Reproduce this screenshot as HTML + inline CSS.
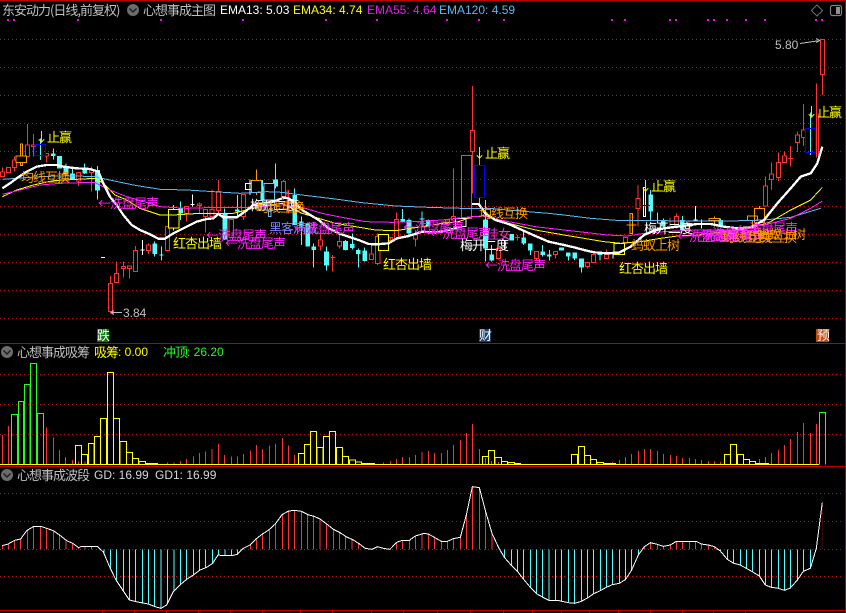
<!DOCTYPE html>
<html><head><meta charset="utf-8"><title>心想事成</title>
<style>
html,body{margin:0;padding:0;background:#000;width:846px;height:613px;overflow:hidden}
svg{display:block;position:absolute;left:0;top:0}
text{font-family:"Liberation Sans","WenQuanYi Zen Hei","Noto Sans CJK SC",sans-serif;font-size:12px}
.c text,text.c{font-family:"WenQuanYi Zen Hei","Noto Sans CJK SC",sans-serif;font-size:13px;letter-spacing:-1px}
.n{fill:none}
</style></head><body>
<svg width="846" height="613" viewBox="0 0 846 613" xmlns="http://www.w3.org/2000/svg" shape-rendering="crispEdges">
<defs>
<clipPath id="l2"><polygon points="6,628 6,617 22,613 44,601 62,597 80,572 100,560 122,559 140,565 160,572 180,586 200,602 218,610 236,623 244,619 292,619 310,636 330,683 348,720 368,750 388,780 408,785 445,792 465,800 483,805 500,795 520,755 540,735 560,718 580,705 600,690 620,682 638,670 654,645 670,647 696,647 712,643 730,625 750,615 768,597 786,583 806,570 826,552 846,524 866,513 884,511 904,514 924,524 942,529 960,537 980,552 1000,568 1020,578 1040,591 1060,600 1080,613 1096,625 1116,628 1132,620 1150,625 1170,628 1190,607 1206,601 1228,601 1246,588 1269,581 1269,628"/></clipPath>
<clipPath id="r2"><polygon points="0,628 0,580 16,582 34,592 55,604 73,604 91,596 112,592 130,525 148,440 169,443 188,515 207,580 228,625 244,652 264,675 284,695 302,718 322,742 342,762 360,772 378,781 408,782 436,788 455,790 475,784 495,773 512,761 532,752 550,742 568,734 589,730 607,719 625,692 646,645 664,620 682,608 703,613 721,619 742,615 760,604 820,604 835,612 856,615 874,620 892,633 913,658 932,670 952,675 970,685 988,695 1009,708 1027,735 1045,742 1066,745 1084,751 1102,744 1123,720 1141,694 1162,685 1180,625 1198,487 1198,628"/></clipPath>
</defs>

<!-- frame -->
<rect x="0" y="0" width="846" height="1" fill="#c00000"/>
<rect x="845" y="0" width="1" height="613" fill="#c00000"/>
<rect x="0" y="343" width="846" height="1" fill="#c00000"/>
<rect x="0" y="466" width="846" height="1" fill="#c00000"/>
<rect x="0" y="610" width="846" height="1" fill="#c00000"/>
<path stroke="#c00000" d="M102.500 611V613M134.500 611V613M166.500 611V613M198.500 611V613M230.500 611V613M262.500 611V613M300.500 611V613M332.500 611V613M371.500 611V613M403.500 611V613M437.500 611V613M470.500 611V613M503.500 611V613M532.500 611V613M561.500 611V613M589.500 611V613M618.500 611V613M650.500 611V613M682.500 611V613M713.500 611V613M745.500 611V613"/>

<!-- dotted grid -->
<path stroke="#c01010" stroke-dasharray="1 3" class="n" d="M0 39.500H844M0 67.500H844M0 95.500H844M0 123.500H844M0 151.500H844M0 179.500H844M0 206.500H844M0 234.500H844M0 262.500H844M0 290.500H844M0 318.500H844M0 374.500H844M0 404.500H844M0 434.500H844M0 493.500H844M0 521.500H844M0 549.500H844M0 576.500H844"/>

<!-- magenta dots -->
<path stroke="#ff00ff" stroke-width="2" d="M7 20h2M13 20h2M77 20h2M160 20h2M242 20h2M325 20h2M376 20h2M446 20h2M478 20h2M503 20h2M611 20h2M624 20h2M669 20h2M675 20h2M707 20h2M713 20h2M726 20h2M745 20h2M764 20h2M815 20h2M821 20h2"/>

<!-- main: left third, zoom coordinates -->
<g transform="scale(.33333)" stroke-width="3">
<path stroke="#ff3232" class="n" d="M7 502V516M44 470V480M44 503V515M82 372V435M100 402V435M100 440V470M140 468V487M236 543V558M274 500V510M274 518V575M331 828V850M331 935V940M349 785V820M370 785V800M370 806V833M388 806V836M407 738V752M445 730V735M445 752V762M559 640V665M598 607V612M598 616V640M616 650V697M636 568V628M655 540V575M655 632V640M731 650V660"/>
<path stroke="#ff3232" fill="#000" d="M1 516h12v14h-12zM20 502h12v16h-12zM38 480h12v23h-12zM76 435h12v35h-12zM94 435h12v5h-12zM137 460h8v8h-8zM230 517h12v26h-12zM268 510h12v8h-12zM325 850h13v85h-13zM343 820h12v28h-12zM364 800h12v6h-12zM382 798h12v8h-12zM401 752h12v63h-12zM439 735h12v17h-12zM496 680h13v72h-13zM553 620h12v20h-12zM592 612h12v4h-12zM610 628h12v22h-12zM630 628h12v22h-12zM649 575h12v57h-12zM687 658h13v55h-13zM725 583h12v67h-12z"/>
<path stroke="#54fcfc" fill="#54fcfc" d="M122 415V480M160 445V478M178 468V505M198 490V530M217 505V540M254 490V522M292 498V598M463 725V770M484 740V782M541 605V660M674 625V720M712 585V650M788 540V610M826 490V565"/>
<path stroke="none" fill="#54fcfc" d="M153 460h14v8h-14zM171 468h15v37h-15zM191 500h14v22h-14zM210 520h15v17h-15zM247 510h14v10h-14zM285 510h15v62h-15zM457 730h14v32h-14zM478 763h13v3h-13zM535 622h14v18h-14zM667 642h15v76h-15zM705 628h14v7h-14zM781 560h14v40h-14zM819 538h15v22h-15z"/>
<path stroke="#ffffff" class="n" d="M427 720V765M421 750H433M578 583V620M572 614H584M750 538V585"/>
<path stroke="#ffffff" fill="#000" d="M736 550h32v18h-32z"/>
<path stroke="#ffffff" class="n" d="M750 538V585M303 772h12" stroke-width="3"/>
<path stroke="#ff9900" class="n" d="M61 432h7v65h-7zM770 508V542M770 578V585"/>
<path stroke="#ff9900" fill="#000" d="M48 468h32v20h-32zM755 542h30v36h-30z"/>
<path stroke="#0000ff" class="n" d="M105 433h32v34h-32z"/>
<path stroke="#ffff00" class="n" d="M520 615V628M520 684V692"/>
<path stroke="#ffff00" fill="#000" d="M505 628h32v56h-32z"/>
<path stroke="#79b8e8" fill="#000" d="M792 550h32v80h-32zM805 630h8v20h-8z"/>
</g>

<!-- main: middle third -->
<g transform="translate(282) scale(.33333)" stroke-width="3">
<path stroke="#ff3232" class="n" d="M5 540V545M5 590V600M19 570V640M115 700V720M115 738V752M152 765V815M145 772H160M172 700V725M172 738V745M268 735V762M287 700V710M287 790V795M343 637V658M400 690V705M400 717V740M515 505V650M571 258V392M571 455V580M706 705V722M699 713H714M763 776V780M820 763V775"/>
<path stroke="#ff3232" fill="#000" d="M-1 545h12v45h-12zM109 720h12v18h-12zM166 725h12v13h-12zM262 762h12v17h-12zM281 710h13v80h-13zM319 712h12v10h-12zM337 658h13v57h-13zM394 705h12v12h-12zM490 660h12v10h-12zM509 650h12v10h-12zM565 392h13v63h-13zM644 745h12v31h-12zM757 755h12v21h-12zM814 755h12v8h-12z"/>
<path stroke="#ff3232" class="n" d="M325 712V722"/>
<path stroke="#54fcfc" fill="#54fcfc" d="M38 565V675M58 650V735M77 670V740M95 730V803M133 740V812M190 720V752M211 700V748M229 745V803M248 742V785M362 627V665M381 655V705M420 635V680M439 658V680M610 600V785M629 735V785M725 695V735M745 730V765M782 735V770M802 750V782"/>
<path stroke="none" fill="#54fcfc" d="M31 585h14v90h-14zM51 665h14v15h-14zM70 670h14v70h-14zM88 740h14v10h-14zM126 755h15v42h-15zM183 723h15v27h-15zM204 732h14v12h-14zM222 750h14v12h-14zM241 752h14v31h-14zM355 657h14v8h-14zM374 660h15v40h-15zM413 655h14v3h-14zM432 660h14v20h-14zM603 658h15v87h-15zM622 763h14v19h-14zM682 702h14v20h-14zM718 712h14v18h-14zM738 730h14v22h-14zM775 755h14v10h-14zM795 763h14v7h-14zM831 742h15v10h-15z"/>
<path stroke="#ff9900" class="n" d="M592 460V496M592 592V610"/>
<path stroke="#e030e0" class="n" d="M539 466h30v189h-30z"/>
<path stroke="#0000ff" class="n" d="M577 496h31v96h-31z"/>
<path stroke="#ffffff" class="n" d="M520 655h32v25h-32z"/>
<path stroke="#ffffff" class="n" d="M668 720V750"/>
<path stroke="#ffff00" fill="#000" d="M289 703h31v49h-31z"/>
<path stroke="#ff3232" class="n" d="M15 570V640"/>
</g>

<!-- main: right third -->
<g transform="translate(564) scale(.33333)" stroke-width="3">
<path stroke="#ff3232" class="n" d="M70 800V805M128 748V763M222 555V596M222 625V680M318 652V680M337 640V650M337 680V685M375 665V700M605 530V558M623 488V522M623 538V570M643 458V487M643 532V543M661 455V468M680 438V500M673 476H687M700 395V405M700 428V456M718 312V390M718 412V438M757 250V472M763 340V470M775 224V285"/>
<path stroke="#ff3232" fill="#000" d="M64 787h12v13h-12zM83 763h12v25h-12zM122 763h12v13h-12zM178 712h12v15h-12zM216 596h12v29h-12zM331 650h12v30h-12zM599 558h12v60h-12zM617 522h12v16h-12zM637 487h12v45h-12zM655 468h12v20h-12zM694 405h12v23h-12zM712 390h12v22h-12zM769 118h12v106h-12z"/>
<path stroke="#54fcfc" fill="#54fcfc" d="M13 757V782M32 757V780M52 775V818M108 755V782M260 570V660M280 637V670M298 655V682M355 648V690M470 655V680M739 338V465"/>
<path stroke="none" fill="#54fcfc" d="M6 757h14v13h-14zM25 757h14v18h-14zM45 775h15v28h-15zM101 762h14v3h-14zM253 583h14v52h-14zM291 660h14v20h-14zM348 660h14v30h-14zM463 660h14v20h-14z"/>
<path stroke="#ffffff" class="n" d="M147 755V775M394 618V665M388 660H400M412 658V685M406 672H418"/>
<path stroke="#ffffff" class="n" d="M238 562h7v88h-7z"/>
<path stroke="#0000ff" class="n" d="M228 617H258M724 385h31v72h-31z"/>
<path stroke="#ff9900" class="n" d="M198 640h8v60h-8zM187 675H218M452 650V680"/>
<path stroke="#ff9900" fill="#000" d="M435 655h32v7h-32zM550 648h31v14h-31zM571 625h31v43h-31z"/>
<path stroke="#ff9900" class="n" d="M586 618V625M566 662V680"/>
<path stroke="#ffff00" fill="#000" d="M150 730h32v34h-32z"/>
</g>

<!-- moving averages -->
<g fill="none">
<g transform="scale(.33333)" fill="none" stroke-width="3">
<polyline stroke="#5cb8f0" points="7,538 120,530 200,527 285,530 320,538 400,555 480,568 560,570 640,575 720,580 800,575 846,577"/>
<polyline stroke="#ffff00" points="7,590 50,570 100,555 160,542 230,538 285,535 310,550 345,585 380,600 420,625 480,645 520,645 600,640 700,640 760,625 846,610"/>
<polyline stroke="#ff20ff" points="7,583 60,570 120,555 180,550 240,548 285,548 330,570 380,590 450,610 480,620 560,625 650,622 760,622 846,615"/>
<polyline stroke="#ffffff" stroke-width="7" points="7,565 30,550 50,535 80,515 110,500 140,495 170,495 190,500 230,505 270,507 295,515 310,550 330,590 350,615 370,645 395,675 420,690 450,703 475,716 495,716 520,700 560,680 590,665 620,657 640,655 655,642 670,652 710,652 735,635 760,615 790,610 820,605 846,595"/>
</g>
<g transform="translate(282) scale(.33333)" fill="none" stroke-width="3">
<polyline stroke="#5cb8f0" points="0,577 60,585 160,597 240,608 340,618 440,622 540,625 620,625 700,632 800,640 846,645"/>
<polyline stroke="#ffff00" points="0,610 60,640 110,655 160,670 220,680 280,690 340,692 420,680 480,670 530,665 570,650 610,648 680,670 760,690 846,705"/>
<polyline stroke="#ff20ff" points="0,615 60,622 120,640 180,652 250,665 330,667 400,665 480,660 550,652 600,648 680,665 760,680 846,690"/>
<polyline stroke="#ffffff" stroke-width="7" points="0,592 20,595 40,610 60,630 85,645 110,660 140,685 170,700 200,710 230,720 260,732 285,733 320,730 345,715 380,708 420,695 460,698 500,690 540,680"/>
<polyline stroke="#ffffff" stroke-width="7" points="570,612 590,612 610,640 640,660 680,672 720,690 760,708 800,725 846,735"/>
</g>
<g transform="translate(564) scale(.33333)" fill="none" stroke-width="3">
<polyline stroke="#5cb8f0" points="0,645 80,655 170,662 280,662 400,663 500,663 600,660 680,652 770,625"/>
<polyline stroke="#ffff00" points="0,705 60,715 120,725 170,730 230,725 290,715 340,708 400,705 480,695 560,685 620,665 680,630 740,600 775,562"/>
<polyline stroke="#ff20ff" points="0,690 70,698 130,705 190,708 240,700 300,695 400,690 500,690 600,675 680,655 740,625 775,603"/>
<polyline stroke="#ffffff" stroke-width="7" points="0,735 30,742 60,750 90,757 130,760 165,758 200,740 240,705 270,692 300,685 340,680 400,672 440,672 480,680 520,685 560,682 600,660 640,610 680,565 710,530 740,520 760,490 775,440"/>
</g>
</g>

<!-- chart labels -->
<g class="c" shape-rendering="auto">
<text x="35" y="142" fill="#ffff00">↓止赢</text>
<text x="21" y="182" fill="#ff9900">均线互换</text>
<text x="98" y="208" fill="#ff20ff">←洗盘尾声</text>
<text x="173" y="248" fill="#ffff00">红杏出墙</text>
<text x="206" y="240" fill="#ff20ff">←洗盘尾声</text>
<text x="225" y="248" fill="#ff20ff">←洗盘尾声</text>
<text x="250" y="210" fill="#ffffff">梅开二度</text>
<text x="256" y="212" fill="#ff9900">均线互换</text>
<text x="269" y="233" fill="#8080ff">黑客满载</text>
<text x="294" y="233" fill="#ff20ff">←洗盘尾声</text>
<text x="383" y="269" fill="#ffff00">红杏出墙</text>
<text x="403" y="232" fill="#ff20ff">←洗盘尾声</text>
<text x="430" y="238" fill="#ff20ff">←洗盘尾声</text>
<text x="486" y="239" fill="#e040e0">佳女</text>
<text x="460" y="250" fill="#ffffff">梅开二度</text>
<text x="473" y="158" fill="#ffff00">↓止赢</text>
<text x="479" y="218" fill="#ff9900">均线互换</text>
<text x="485" y="270" fill="#ff20ff">←洗盘尾声</text>
<text x="619" y="273" fill="#ffff00">红杏出墙</text>
<text x="631" y="250" fill="#ff9900">蚂蚁上树</text>
<text x="644" y="233" fill="#ffffff">梅开二度</text>
<text x="639" y="191" fill="#ffff00">↓止赢</text>
<text x="677" y="241" fill="#ff20ff">←洗盘尾声</text>
<text x="690" y="240" fill="#ff20ff">←洗盘尾声</text>
<text x="700" y="238" fill="#ff20ff">←洗盘尾声</text>
<text x="704" y="241" fill="#ff20ff">←洗盘尾声</text>
<text x="737" y="233" fill="#ff20ff">←洗盘尾声</text>
<text x="722" y="242" fill="#ff9900">均线互换</text>
<text x="748" y="242" fill="#ff9900">均线互换</text>
<text x="757" y="239" fill="#ff9900">蚂蚁上树</text>
<text x="805" y="117" fill="#ffff00">↓止赢</text>
</g>
<path stroke="#c0c0c0" fill="none" d="M111 312.500H122M111 312.500l3-2M111 312.500l3 2M800 43.500l20-3M820 40.500l-4-2M820 40.500l-4 2"/>
<text x="123" y="317" fill="#c0c0c0">3.84</text>
<text x="775" y="49" fill="#c0c0c0">5.80</text>

<!-- badges -->
<rect x="97" y="329" width="12" height="13" fill="#0a7a0a"/><text class="c" x="97" y="340" fill="#fff">跌</text>
<rect x="479" y="329" width="12" height="13" fill="#14406e"/><text class="c" x="479" y="340" fill="#fff">财</text>
<rect x="816" y="329" width="13" height="13" fill="#c04a10"/><text class="c" x="817" y="340" fill="#fff">预</text>

<!-- header -->
<g shape-rendering="auto">
<text x="2" y="15" fill="#c0c0c0" class="c">东安动力(日线,前复权)</text>
<circle cx="133" cy="10" r="6" fill="#6c6c6c"/><path d="M129.500 8.500l3.500 3.500l3.500-3.500" stroke="#222" stroke-width="1.500" fill="none"/>
<text x="143" y="15" fill="#c0c0c0" class="c">心想事成主图</text>
<text x="220" y="14" fill="#ffffff">EMA13: 5.03</text>
<text x="293" y="14" fill="#ffff00">EMA34: 4.74</text>
<text x="367" y="14" fill="#e020e0">EMA55: 4.64</text>
<text x="439" y="14" fill="#5cb8f0">EMA120: 4.59</text>
<path d="M817 5l5.500 5.500l-5.500 5.500l-5.500-5.500z" stroke="#707070" fill="none"/>
<rect x="830.500" y="5.500" width="11" height="10" rx="2" stroke="#808080" fill="none" stroke-width="1.200"/><rect x="836" y="7" width="4" height="7" fill="#909090"/>

<circle cx="7" cy="352" r="6" fill="#6c6c6c"/><path d="M3.500 350.500l3.500 3.500l3.500-3.500" stroke="#222" stroke-width="1.500" fill="none"/>
<text x="17" y="357" fill="#c0c0c0" class="c">心想事成吸筹</text>
<text x="94" y="357" fill="#ffff00" class="c">吸筹</text><text x="118" y="356" fill="#ffff00">: 0.00</text>
<text x="163" y="357" fill="#20ff20" class="c">冲顶</text><text x="187" y="356" fill="#20ff20">: 26.20</text>

<circle cx="7" cy="475" r="6" fill="#6c6c6c"/><path d="M3.500 473.500l3.500 3.500l3.500-3.500" stroke="#222" stroke-width="1.500" fill="none"/>
<text x="17" y="480" fill="#c0c0c0" class="c">心想事成波段</text>
<text x="94" y="479" fill="#d8d8d8">GD: 16.99</text>
<text x="155" y="479" fill="#d8d8d8">GD1: 16.99</text>
</g>

<!-- sub 1: left -->
<g transform="translate(0,340) scale(.33333)" stroke-width="3" fill="none">
<path stroke="#ff3232" d="M7 285V373M26 258V373M139 262V373M160 292V373M178 330V373M197 351V373M217 360V373M236 364V373M255 365V373M503 368V373M522 368V373M541 363V373M560 357V373M580 349V373M598 339V373M617 334V373M636 327V373M656 312V373M674 345V373M694 349V373M712 349V373M731 342V373M751 331V373M770 315V373M788 327V373M808 316V373M827 312V373M847 294V373M866 316V373M884 345V373M1150 368V373M1171 363V373M1189 357V373M1208 351V373M1228 351V373M1246 345V373M1266 336V373"/>
<path stroke="#20ff20" d="M35 373V223H52V373M55 373V184H71V373M73 373V133H90V373M91 373V70H109V373M112 373V220H131V373"/>
<path stroke="#ffff00" d="M226 373V316H245V373M245 373V343H263V373M265 373V310H282V373M283 373V289H301V373M302 373V235H320V373M322 373V97H340V373M341 373V235H359V373M360 373V304H379V373M380 373V337H397V373M398 373V355H416V373M417 373V364H436V373M437 373V370H455V373M455 373V370H473V373M895 373V340H913V373M913 373V313H932V373M932 373V274H950V373M951 373V322H969V373M970 373V289H988V373M989 373V274H1007V373M1009 373V322H1027V373M1028 373V349H1046V373M1048 373V360H1066V373M1067 373V366H1085V373M1085 373V370H1104V373M1105 373V370H1124V373"/>
</g>
<!-- sub 1: right -->
<g transform="translate(423,340) scale(.33333)" stroke-width="3" fill="none">
<path stroke="#ff3232" d="M16 333V373M34 339V373M55 339V373M73 330V373M91 315V373M112 300V373M130 279V373M148 252V373M169 327V373M187 354V373M206 363V373M226 366V373M568 366V373M589 360V373M607 351V373M625 342V373M646 333V373M664 327V373M682 327V373M703 333V373M721 342V373M742 345V373M760 348V373M778 354V373M799 354V373M817 357V373M835 360V373M856 363V373M874 363V373M892 366V373M1009 357V373M1027 351V373M1045 339V373M1066 330V373M1084 315V373M1102 297V373M1123 276V373M1141 249V373M1162 279V373M1180 252V373"/>
<path stroke="#ffff00" d="M178 373V349H196V373M196 373V331H215V373M216 373V352H235V373M236 373V364H254V373M255 373V367H274V373M275 373V370H293V373M445 373V343H464V373M466 373V319H484V373M485 373V346H503V373M503 373V358H521V373M522 373V367H542V373M542 373V370H560V373M560 373V370H578V373M904 373V343H922V373M922 373V313H941V373M943 373V343H961V373M962 373V358H980V373M980 373V364H998V373M998 373V370H1018V373M1018 373V370H1036V373"/>
<path stroke="#20ff20" d="M1189 373V217H1208V373"/>
</g>
<path stroke="#ffff00" d="M0 464.500H819"/>

<!-- sub 2: stems -->
<g transform="translate(0,340) scale(.33333)" stroke-width="3" fill="none" clip-path="url(#l2)">
<path stroke="#ff3232" d="M7 430V628M26 430V628M44 430V628M62 430V628M82 430V628M101 430V628M122 430V628M140 430V628M160 430V628M178 430V628M198 430V628M218 430V628M236 430V628M255 430V628M274 430V628M731 430V628M751 430V628M770 430V628M788 430V628M808 430V628M827 430V628M847 430V628M866 430V628M884 430V628M904 430V628M922 430V628M941 430V628M960 430V628M980 430V628M1000 430V628M1018 430V628M1037 430V628M1056 430V628M1076 430V628M1190 430V628M1208 430V628M1228 430V628M1246 430V628M1266 430V628"/>
<path stroke="#54fcfc" d="M312 628V810M331 628V810M350 628V810M370 628V810M388 628V810M407 628V810M427 628V810M445 628V810M464 628V810M483 628V810M503 628V810M522 628V810M541 628V810M560 628V810M580 628V810M598 628V810M617 628V810M638 628V810M656 628V810M675 628V810M694 628V810M712 628V810"/>
</g>
<g transform="translate(423,340) scale(.33333)" stroke-width="3" fill="none" clip-path="url(#r2)">
<path stroke="#ff3232" d="M16 430V628M34 430V628M55 430V628M73 430V628M91 430V628M112 430V628M130 430V628M148 430V628M169 430V628M188 430V628M207 430V628M228 430V628M664 430V628M682 430V628M703 430V628M721 430V628M742 430V628M760 430V628M778 430V628M799 430V628M817 430V628M835 430V628M856 430V628M874 430V628M1180 430V628M1198 430V628"/>
<path stroke="#54fcfc" d="M244 628V810M265 628V810M284 628V810M302 628V810M322 628V810M340 628V810M358 628V810M378 628V810M397 628V810M415 628V810M436 628V810M455 628V810M475 628V810M493 628V810M512 628V810M532 628V810M550 628V810M568 628V810M589 628V810M607 628V810M625 628V810M646 628V810M892 628V810M913 628V810M932 628V810M952 628V810M970 628V810M988 628V810M1009 628V810M1027 628V810M1045 628V810M1066 628V810M1084 628V810M1102 628V810M1123 628V810M1141 628V810M1162 628V810"/>
</g>
<!-- sub 2: white curve -->
<g transform="translate(0,340) scale(.33333)" stroke-width="3" fill="none" stroke="#fff">
<polyline points="6,617 22,613 44,601 62,597 80,572 100,560 122,559 140,565 160,572 180,586 200,602 218,610 236,623 244,619 292,619 310,636 330,683 348,720 368,750 388,780 408,785 445,792 465,800 483,805 500,795 520,755 540,735 560,718 580,705 600,690 620,682 638,670 654,645 670,647 696,647 712,643 730,625 750,615 768,597 786,583 806,570 826,552 846,524 866,513 884,511 904,514 924,524 942,529 960,537 980,552 1000,568 1020,578 1040,591 1060,600 1080,613 1096,625 1116,628 1132,620 1150,625 1170,628 1190,607 1206,601 1228,601 1246,588 1269,581"/>
</g>
<g transform="translate(423,340) scale(.33333)" stroke-width="3" fill="none" stroke="#fff">
<polyline points="0,580 16,582 34,592 55,604 73,604 91,596 112,592 130,525 148,440 169,443 188,515 207,580 228,625 244,652 264,675 284,695 302,718 322,742 342,762 360,772 378,781 408,782 436,788 455,790 475,784 495,773 512,761 532,752 550,742 568,734 589,730 607,719 625,692 646,645 664,620 682,608 703,613 721,619 742,615 760,604 820,604 835,612 856,615 874,620 892,633 913,658 932,670 952,675 970,685 988,695 1009,708 1027,735 1045,742 1066,745 1084,751 1102,744 1123,720 1141,694 1162,685 1180,625 1198,487"/>
</g>
</svg>
</body></html>
